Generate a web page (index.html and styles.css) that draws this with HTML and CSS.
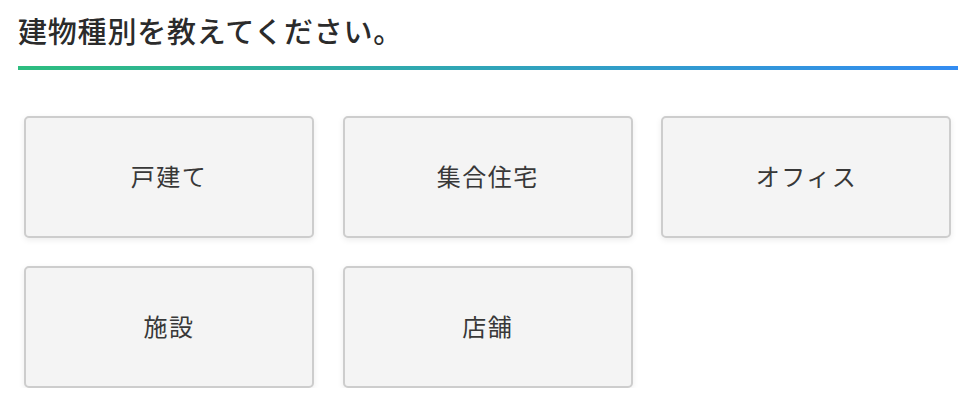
FILE: index.html
```html
<!DOCTYPE html>
<html lang="ja">
<head>
<meta charset="utf-8">
<link rel="stylesheet" href="styles.css">
</head>
<body>
<div class="page">
  <div class="head">
    <h1 class="title">建物種別を教えてください。</h1>
    <div class="rule"></div>
  </div>
  <div class="options">
    <button class="opt">戸建て</button>
    <button class="opt">集合住宅</button>
    <button class="opt">オフィス</button>
    <button class="opt">施設</button>
    <button class="opt">店舗</button>
  </div>
</div>
</body>
</html>
```
FILE: styles.css
```css
html, body {
  margin: 0;
  padding: 0;
  background: #ffffff;
}
body {
  font-family: "Noto Sans CJK JP", "Noto Sans", sans-serif;
  color: #333333;
}
.page {
  width: 976px;
}
.head {
  padding: 9px 18px 0 18px;
}
.title {
  margin: 0;
  font-size: 29px;
  font-weight: 500;
  line-height: 42px;
  letter-spacing: 0.8px;
  color: #2b2b2b;
}
.rule {
  margin-top: 15px;
  height: 4px;
  background: linear-gradient(to right, #2dbd7f, #338cf2);
}
.options {
  display: grid;
  grid-template-columns: repeat(3, 1fr);
  column-gap: 28.5px;
  row-gap: 28px;
  padding: 45.5px 24.5px 0 24px;
}
.opt {
  height: 122px;
  margin: 0;
  padding: 0 0 3px 0;
  background: #f4f4f4;
  border: 2px solid #cdcdcd;
  border-radius: 5px;
  box-shadow: 0 2px 6px rgba(0, 0, 0, 0.08);
  font-family: "Noto Sans CJK JP", "Noto Sans", sans-serif;
  font-size: 24px;
  font-weight: 400;
  letter-spacing: 1.5px;
  color: #383838;
  display: flex;
  align-items: center;
  justify-content: center;
}
```
